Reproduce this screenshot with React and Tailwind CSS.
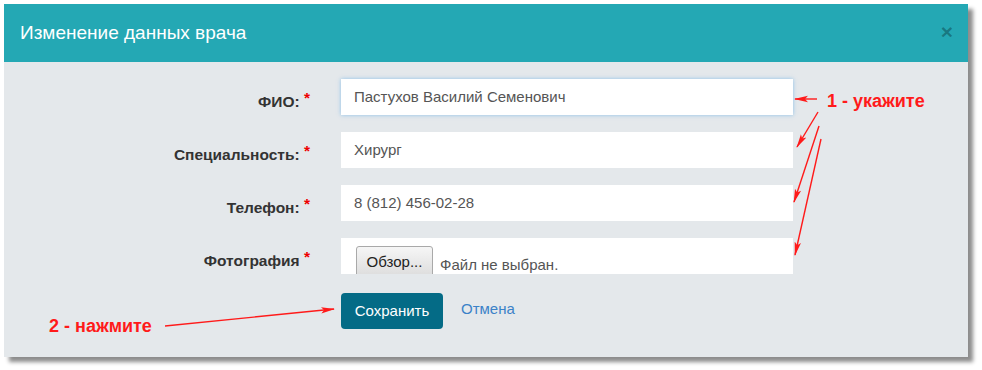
const FONT = { fontFamily: '"Liberation Sans", Arial, sans-serif' }

const FIELDS = [
  { label: 'ФИО:', value: 'Пастухов Василий Семенович', focused: true },
  { label: 'Специальность:', value: 'Хирург' },
  { label: 'Телефон:', value: '8 (812) 456-02-28' },
]

function Label({ text }) {
  return (
    <div className="w-[306px] pt-[14px] text-right text-[15.5px] font-bold leading-[18px] text-[#333]">
      {text} <span className="relative -top-[4px] text-[#e00]">*</span>
    </div>
  )
}

function Arrow({ x1, y1, x2, y2 }) {
  return <line x1={x1} y1={y1} x2={x2} y2={y2} stroke="#ff1a1a" strokeWidth="1.4" markerEnd="url(#head)" />
}

export default function App() {
  return (
    <div className="relative h-[370px] w-[982px] bg-white pl-[4px] pt-[4px]" style={FONT}>
      <div className="w-[964px] shadow-[5px_5px_4px_rgba(0,0,0,0.45)]">
        <div className="flex h-[58px] items-center justify-between bg-[#24a8b4] pl-[16px] pr-[15px]">
          <h2 className="text-[19px] text-white">Изменение данных врача</h2>
          <span className="-mt-[3px] text-[21px] font-bold leading-none text-black/30">×</span>
        </div>
        <div className="bg-[#e4e8eb] pb-[28px] pt-[17px]">
          <div className="flex flex-col gap-[17px]">
            {FIELDS.map((f) => (
              <div key={f.label} className="flex gap-[31px]">
                <Label text={f.label} />
                <div
                  className={`flex h-[36px] w-[452px] items-center bg-white pl-[13px] text-[15px] text-[#555] ${
                    f.focused ? 'shadow-[0_0_4px_rgba(102,175,233,0.7)]' : ''
                  }`}
                >
                  {f.value}
                </div>
              </div>
            ))}
            <div className="flex gap-[31px]">
              <Label text="Фотография" />
              <div className="flex h-[36px] w-[452px] items-start gap-[7px] overflow-hidden bg-white pl-[15px] pt-[8px] text-[15px]">
                <button className="h-[32px] w-[77px] rounded-[3px] border border-[#a9a9a9] bg-gradient-to-b from-[#f6f6f6] to-[#dcdcdc] text-[15px] text-[#222]">
                  Обзор...
                </button>
                <span className="pt-[8px] text-[#555]">Файл не выбран.</span>
              </div>
            </div>
          </div>
          <div className="mt-[19px] flex items-center gap-[18px] pl-[337px]">
            <button className="h-[36px] w-[102px] rounded-[4px] bg-[#046b86] text-[15px] text-white">Сохранить</button>
            <span className="-mt-[4px] text-[15px] text-[#3b82c8]">Отмена</span>
          </div>
        </div>
      </div>

      <span className="absolute left-[827px] top-[88px] text-[18px] font-bold text-[#ff1a1a]">1 - укажите</span>
      <span className="absolute left-[49px] top-[313px] text-[18px] font-bold text-[#ff1a1a]">2 - нажмите</span>
      <svg className="pointer-events-none absolute inset-0" width="982" height="370">
        <defs>
          <marker id="head" markerUnits="userSpaceOnUse" markerWidth="14" markerHeight="8" refX="13" refY="4" orient="auto">
            <path d="M0 0.8 L14 4 L0 7.2 L3 4 Z" fill="#ff1a1a" />
          </marker>
        </defs>
        <Arrow x1={817} y1={99} x2={795} y2={99} />
        <Arrow x1={818} y1={112} x2={797} y2={147} />
        <Arrow x1={819} y1={126} x2={794} y2={202} />
        <Arrow x1={821} y1={139} x2={795} y2={255} />
        <Arrow x1={165} y1={326} x2={334} y2={309} />
      </svg>
    </div>
  )
}
